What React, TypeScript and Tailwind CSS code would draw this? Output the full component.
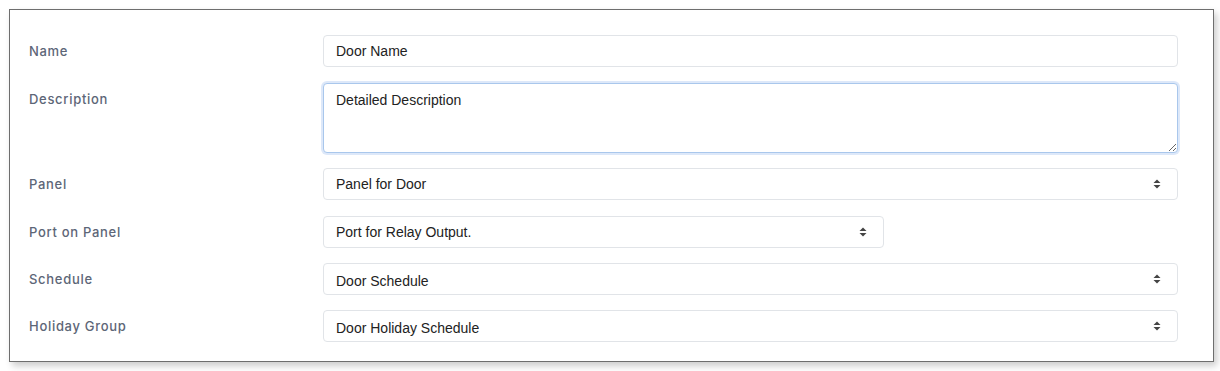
import React from 'react';

const labelCls =
  'w-[294px] shrink-0 pt-[6px] text-[13px] leading-5 font-medium tracking-[0.7px] text-[#5d6677]';

const boxCls =
  'block h-8 w-full rounded border border-[#e1e4e8] bg-white px-3 text-[14px] text-[#222] outline-none';

const Arrows = () => (
  <svg
    className="pointer-events-none absolute right-[17px] top-[11px]"
    width="8"
    height="10"
    viewBox="0 0 8 10"
  >
    <path d="M4 0.5 L7.5 4 L0.5 4 Z" fill="#444" />
    <path d="M4 9.5 L7.5 6 L0.5 6 Z" fill="#444" />
  </svg>
);

const SelectBox = ({
  value,
  className,
  low,
}: {
  value: string;
  className?: string;
  low?: boolean;
}) => (
  <div
    className={`relative ${className ?? 'w-full'}`}
    style={{ fontFamily: '"Liberation Sans", Arial, sans-serif' }}
  >
    <select
      className={`${boxCls} appearance-none ${low ? 'pt-[4px]' : ''}`}
      defaultValue={value}
    >
      <option>{value}</option>
    </select>
    <Arrows />
  </div>
);

const Row = ({
  label,
  children,
  className,
}: {
  label: string;
  children: React.ReactNode;
  className?: string;
}) => (
  <div className={`flex items-start ${className ?? ''}`}>
    <label className={labelCls}>{label}</label>
    <div className="flex-1">{children}</div>
  </div>
);

const App = () => {
  return (
    <div
      className="h-[371px] w-[1220px] bg-white p-[9px]"
      style={{ fontFamily: '"Liberation Sans", Arial, sans-serif' }}
    >
      <div className="h-[353px] w-[1205px] border border-[#6e6e6e] bg-white pb-[19px] pl-[19px] pr-[35px] pt-[25px] shadow-[3px_4px_7px_rgba(0,0,0,0.2)]">
        <div style={{ fontFamily: 'Inter, "Open Sans", sans-serif' }}>
          <Row label="Name">
            <input
              className={boxCls}
              defaultValue="Door Name"
              style={{ fontFamily: '"Liberation Sans", Arial, sans-serif' }}
            />
          </Row>
          <Row label="Description" className="mt-4">
            <textarea
              className="block h-[70px] w-full resize-y rounded border border-[#a9c7ec] bg-white px-3 pt-[6px] text-[14px] leading-5 text-[#222] shadow-[0_0_0_2px_rgba(120,165,230,0.25)] outline-none"
              defaultValue="Detailed Description"
              style={{ fontFamily: '"Liberation Sans", Arial, sans-serif' }}
            />
          </Row>
          <Row label="Panel" className="mt-[15px]">
            <SelectBox value="Panel for Door" />
          </Row>
          <Row label="Port on Panel" className="mt-4">
            <SelectBox value="Port for Relay Output." className="w-[561px]" />
          </Row>
          <Row label="Schedule" className="mt-[15px]">
            <SelectBox value="Door Schedule" low />
          </Row>
          <Row label="Holiday Group" className="mt-[15px]">
            <SelectBox value="Door Holiday Schedule" low />
          </Row>
        </div>
      </div>
    </div>
  );
};

export default App;
